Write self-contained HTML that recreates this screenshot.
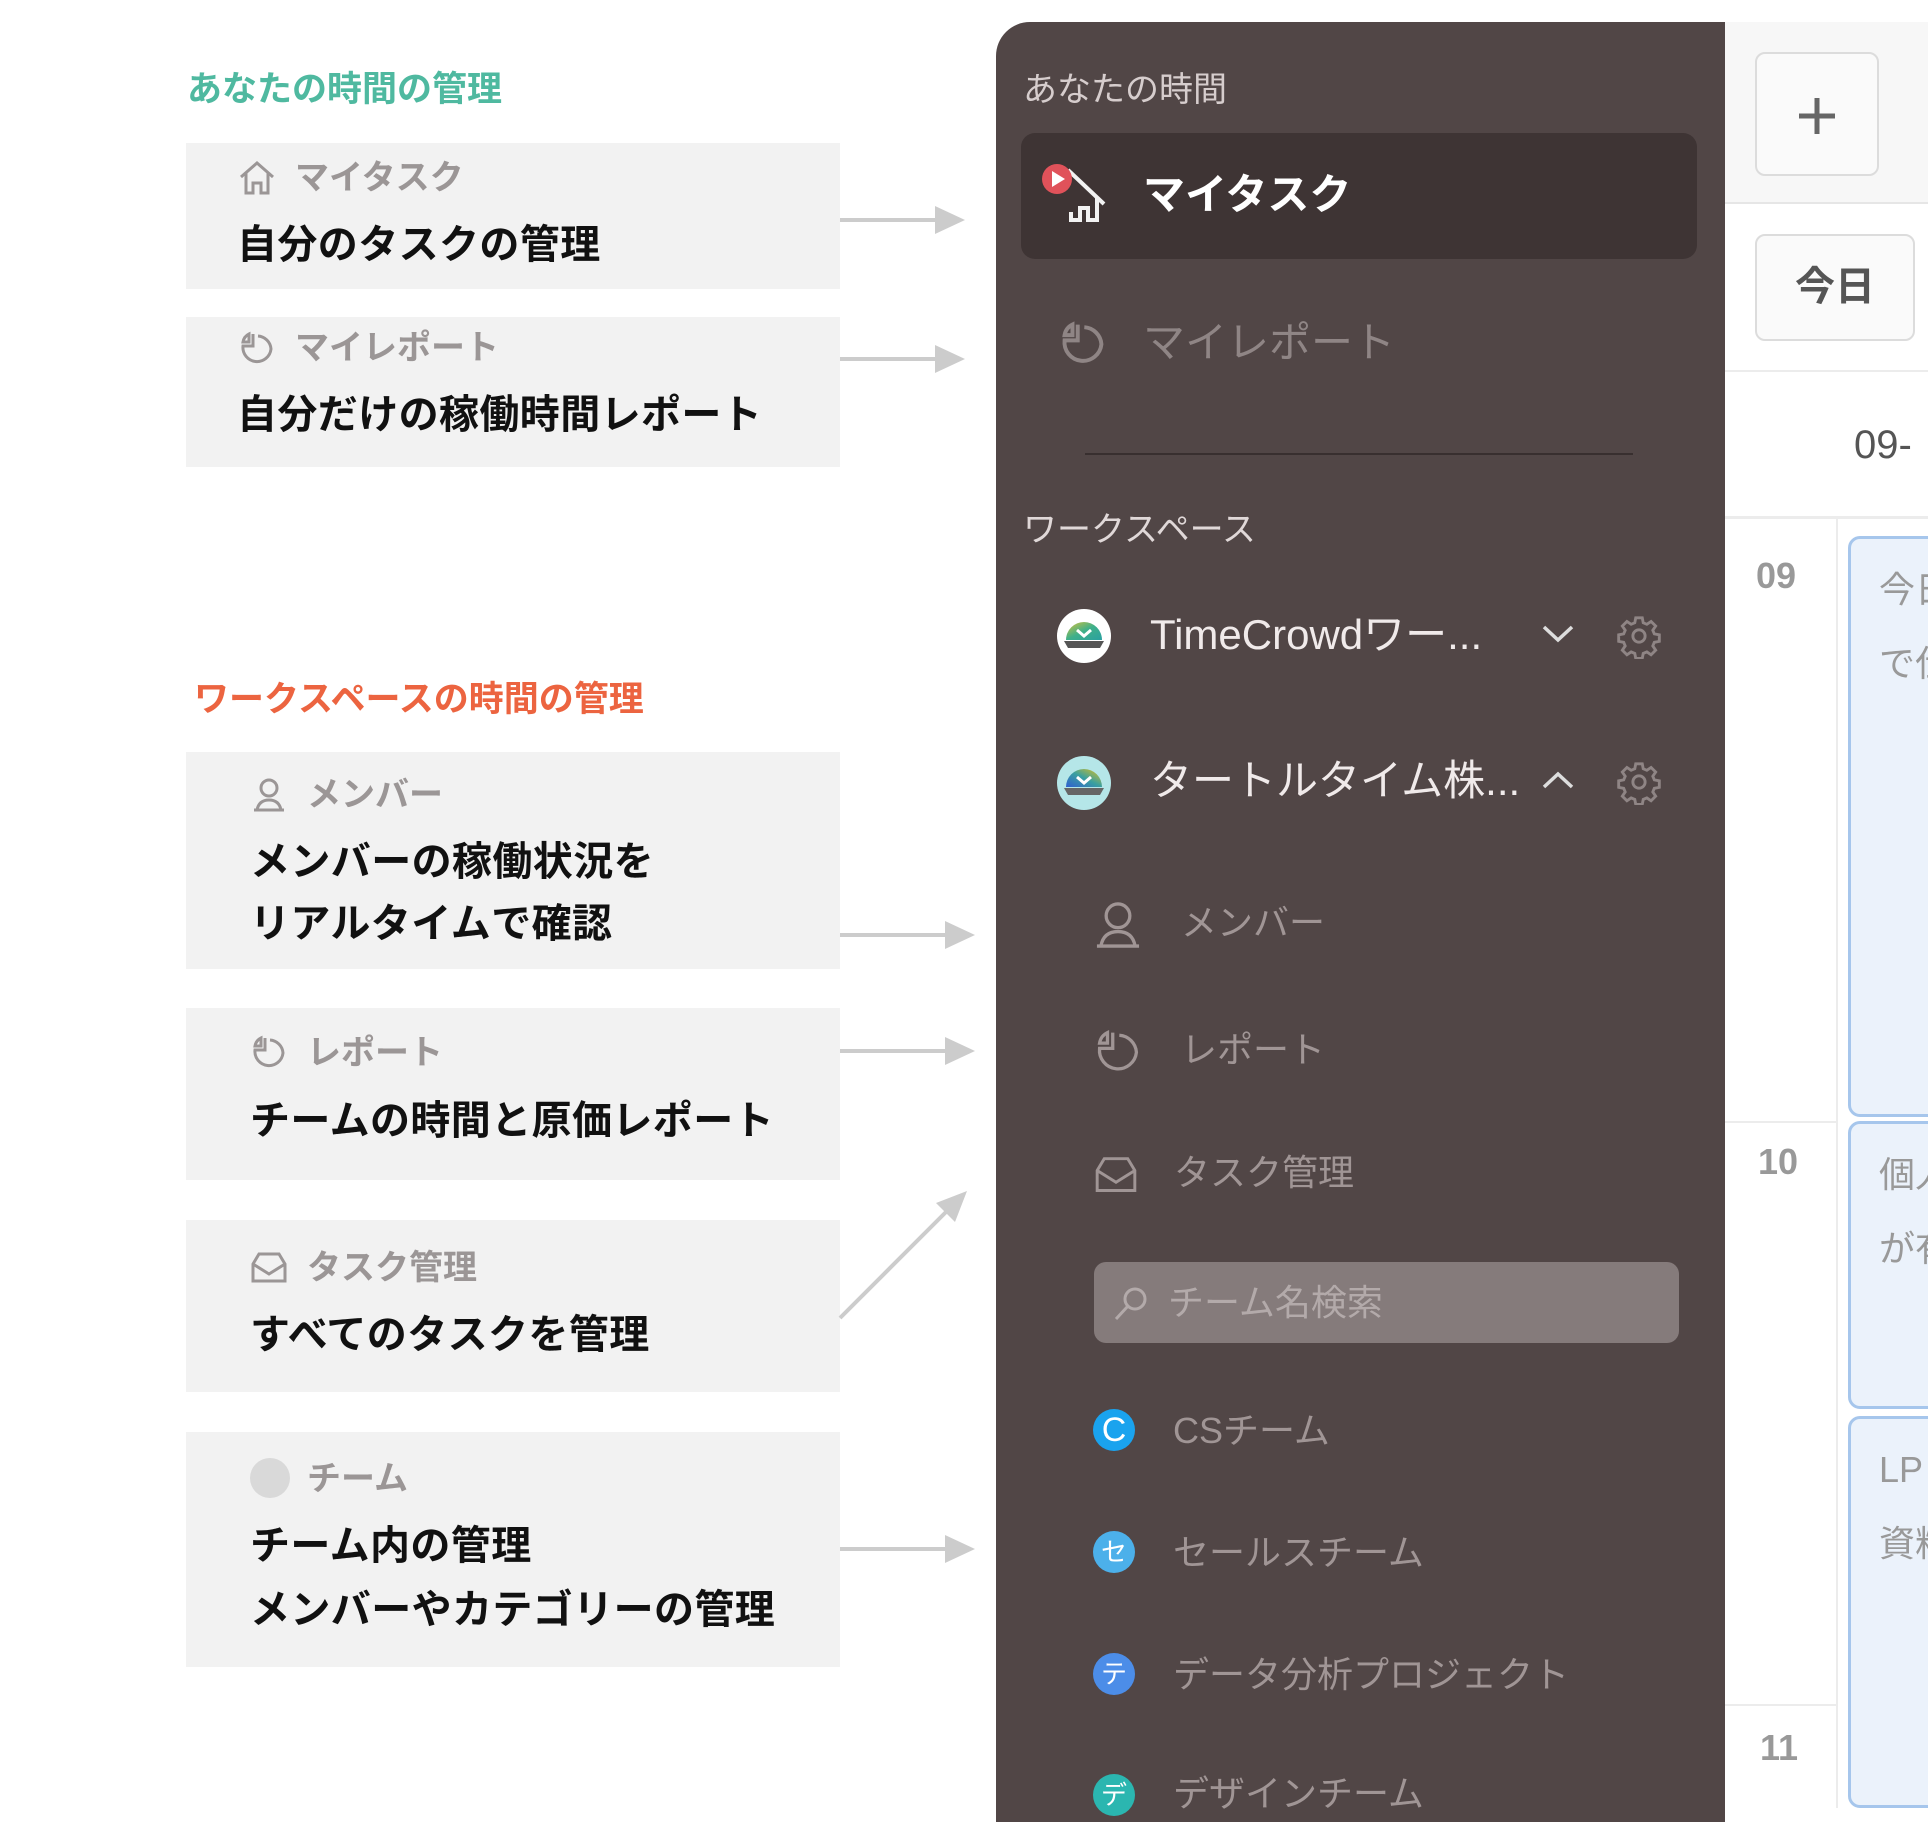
<!DOCTYPE html>
<html><head><meta charset="utf-8">
<style>
*{margin:0;padding:0;box-sizing:border-box}
body{width:1928px;height:1808px;background:#fff;position:relative;overflow:hidden;font-family:"Liberation Sans","Noto Sans CJK JP",sans-serif}
.a{position:absolute;white-space:nowrap}
.card{position:absolute;left:186px;width:654px;background:#f2f2f2}
.lab{position:absolute;font-size:34px;font-weight:700;color:#9b9696;line-height:40px;white-space:nowrap}
.big{position:absolute;font-size:40px;font-weight:700;color:#111;line-height:48px;white-space:nowrap;letter-spacing:0.4px}
.sb{position:absolute;left:996px;top:22px;width:729px;height:1800px;background:#514646;border-top-left-radius:34px}
.item{position:absolute;font-size:38px;color:#8f8585;line-height:46px;white-space:nowrap}
.sub{position:absolute;font-size:36px;color:#a09595;line-height:44px;white-space:nowrap}
</style></head><body>

<div class="a" style="left:187px;top:70px;font-size:35px;font-weight:700;color:#4fb9a0;line-height:40px">あなたの時間の管理</div>
<div class="a" style="left:194px;top:680px;font-size:35px;font-weight:700;color:#ec6440;line-height:40px">ワークスペースの時間の管理</div>

<div class="card" style="top:143px;height:146px"></div>
<svg class="a" style="left:238px;top:159px" width="38" height="38" viewBox="0 0 38 38" fill="none" stroke="#9b9696" stroke-width="3"><path d="M3 18 L19 4 L35 18 M8 14 V34 H15 V24 H23 V34 H30 V14"/></svg>
<div class="lab" style="left:295px;top:158px">マイタスク</div>
<div class="big" style="left:237px;top:221px">自分のタスクの管理</div>

<div class="card" style="top:317px;height:150px"></div>
<svg class="a" style="left:238px;top:329px" width="38" height="38" viewBox="0 0 38 38" fill="none" stroke="#9b9696" stroke-width="3"><path d="M15 5 V17 H5 A14 14 0 0 0 33 20 A14 14 0 0 0 20 7"/><path d="M5 13 A11 11 0 0 1 11 5 V13 Z"/></svg>
<div class="lab" style="left:295px;top:328px">マイレポート</div>
<div class="big" style="left:237px;top:391px">自分だけの稼働時間レポート</div>

<div class="card" style="top:752px;height:217px"></div>
<svg class="a" style="left:250px;top:776px" width="38" height="38" viewBox="0 0 38 38" fill="none" stroke="#9b9696" stroke-width="3"><circle cx="19" cy="12" r="8"/><path d="M4 34 H34 M7 34 Q9 24 19 24 Q29 24 31 34"/></svg>
<div class="lab" style="left:307px;top:775px">メンバー</div>
<div class="big" style="left:250px;top:838px">メンバーの稼働状況を</div>
<div class="big" style="left:250px;top:900px">リアルタイムで確認</div>

<div class="card" style="top:1008px;height:172px"></div>
<svg class="a" style="left:250px;top:1033px" width="38" height="38" viewBox="0 0 38 38" fill="none" stroke="#9b9696" stroke-width="3"><path d="M15 5 V17 H5 A14 14 0 0 0 33 20 A14 14 0 0 0 20 7"/><path d="M5 13 A11 11 0 0 1 11 5 V13 Z"/></svg>
<div class="lab" style="left:307px;top:1033px">レポート</div>
<div class="big" style="left:250px;top:1097px">チームの時間と原価レポート</div>

<div class="card" style="top:1220px;height:172px"></div>
<svg class="a" style="left:250px;top:1250px" width="38" height="34" viewBox="0 0 38 34" fill="none" stroke="#9b9696" stroke-width="3"><path d="M3 14 L9 4 H29 L35 14 V31 H3 Z M3 14 L19 24 L35 14"/></svg>
<div class="lab" style="left:307px;top:1248px">タスク管理</div>
<div class="big" style="left:250px;top:1311px">すべてのタスクを管理</div>

<div class="card" style="top:1432px;height:235px"></div>
<div class="a" style="left:250px;top:1458px;width:40px;height:40px;border-radius:50%;background:#d9d9d9"></div>
<div class="lab" style="left:307px;top:1459px">チーム</div>
<div class="big" style="left:250px;top:1522px">チーム内の管理</div>
<div class="big" style="left:250px;top:1586px">メンバーやカテゴリーの管理</div>

<svg class="a" style="left:0;top:0" width="1000" height="1808" stroke="#cccccc" stroke-width="4" fill="#cccccc">
<line x1="840" y1="220" x2="940" y2="220"/><polygon points="935,206 965,220 935,234" stroke="none"/>
<line x1="840" y1="359" x2="940" y2="359"/><polygon points="935,345 965,359 935,373" stroke="none"/>
<line x1="840" y1="935" x2="950" y2="935"/><polygon points="945,921 975,935 945,949" stroke="none"/>
<line x1="840" y1="1051" x2="950" y2="1051"/><polygon points="945,1037 975,1051 945,1065" stroke="none"/>
<line x1="840" y1="1549" x2="950" y2="1549"/><polygon points="945,1535 975,1549 945,1563" stroke="none"/>
<line x1="840" y1="1318" x2="950" y2="1208"/><polygon points="967,1191 955,1222 936,1203" stroke="none"/>
</svg>

<!-- right calendar -->
<div class="a" style="left:1725px;top:22px;width:203px;height:181px;background:#f7f7f7"></div>
<div class="a" style="left:1725px;top:202px;width:203px;height:2px;background:#e6e6e6"></div>
<div class="a" style="left:1755px;top:52px;width:124px;height:124px;border:2px solid #dcdcdc;border-radius:10px;background:#fafafa"></div>
<svg class="a" style="left:1795px;top:94px" width="44" height="44" viewBox="0 0 44 44" stroke="#666" stroke-width="5"><path d="M22 4 V40 M4 22 H40"/></svg>
<div class="a" style="left:1755px;top:234px;width:160px;height:107px;border:2px solid #dcdcdc;border-radius:10px;background:#fafafa;font-size:40px;font-weight:700;color:#555;text-align:center;line-height:102px">今日</div>
<div class="a" style="left:1725px;top:370px;width:203px;height:2px;background:#ececec"></div>
<div class="a" style="left:1854px;top:423px;font-size:40px;color:#555;line-height:44px">09-</div>
<div class="a" style="left:1725px;top:516px;width:203px;height:3px;background:#ececec"></div>
<div class="a" style="left:1836px;top:519px;width:2px;height:1289px;background:#ececec"></div>
<div class="a" style="left:1725px;top:1121px;width:111px;height:2px;background:#ececec"></div>
<div class="a" style="left:1725px;top:1704px;width:111px;height:2px;background:#ececec"></div>
<div class="a" style="left:1756px;top:556px;font-size:36px;font-weight:700;color:#999;line-height:40px">09</div>
<div class="a" style="left:1758px;top:1142px;font-size:36px;font-weight:700;color:#999;line-height:40px">10</div>
<div class="a" style="left:1760px;top:1728px;font-size:36px;font-weight:700;color:#999;line-height:40px">11</div>
<div class="a" style="left:1848px;top:536px;width:100px;height:581px;background:#ebf2fb;border:3px solid #a6c6ec;border-radius:12px;font-size:36px;color:#999;padding:14px 0 0 28px;line-height:74px">今日<br>で仕</div>
<div class="a" style="left:1848px;top:1121px;width:100px;height:288px;background:#ebf2fb;border:3px solid #a6c6ec;border-radius:12px;font-size:36px;color:#999;padding:14px 0 0 28px;line-height:74px">個人<br>が有</div>
<div class="a" style="left:1848px;top:1416px;width:100px;height:392px;background:#ebf2fb;border:3px solid #a6c6ec;border-radius:12px;font-size:36px;color:#999;padding:14px 0 0 28px;line-height:74px">LP<br>資料</div>

<!-- sidebar -->
<div class="sb"></div>
<div class="a" style="left:1023px;top:70px;font-size:34px;color:#d6cdcd;line-height:40px">あなたの時間</div>
<div class="a" style="left:1021px;top:133px;width:676px;height:126px;background:#3e3434;border-radius:14px"></div>
<svg class="a" style="left:1040px;top:160px" width="70" height="66" viewBox="0 0 70 66" fill="none">
<path d="M28 10 L64 44 M57 38 V60 H48 V48 H40 V60 H31 V52" stroke="#f2f2f2" stroke-width="4"/>
<circle cx="17" cy="19" r="15" fill="#e0525a"/><polygon points="12,11 25,19 12,27" fill="#fff"/></svg>
<div class="a" style="left:1143px;top:170px;font-size:42px;font-weight:700;color:#fff;line-height:50px">マイタスク</div>
<svg class="a" style="left:1058px;top:318px" width="50" height="50" viewBox="0 0 38 38" fill="none" stroke="#8f8585" stroke-width="3"><path d="M15 5 V17 H5 A14 14 0 0 0 33 20 A14 14 0 0 0 20 7"/><path d="M5 13 A11 11 0 0 1 11 5 V13 Z"/></svg>
<div class="item" style="left:1143px;top:320px;font-size:42px">マイレポート</div>
<div class="a" style="left:1085px;top:453px;width:548px;height:2px;background:#382f2f"></div>
<div class="a" style="left:1023px;top:510px;font-size:34px;color:#e0d8d8;line-height:40px">ワークスペース</div>

<svg class="a" style="left:1056px;top:608px" width="56" height="56" viewBox="0 0 56 56"><defs><linearGradient id="g1" x1="0" y1="0" x2="1" y2="1"><stop offset="0" stop-color="#d8c23a"/><stop offset=".5" stop-color="#3fb08a"/><stop offset="1" stop-color="#2aa0a0"/></linearGradient><linearGradient id="g2" x1="0" y1="1" x2="1" y2="0"><stop offset="0" stop-color="#2f5fd0"/><stop offset=".5" stop-color="#3aa0a0"/><stop offset="1" stop-color="#e0c020"/></linearGradient></defs>
<circle cx="28" cy="28" r="27" fill="#fff"/><path d="M10 32 A18 18 0 0 1 46 32 Z" fill="url(#g1)"/><path d="M8 33 H48 L44 40 H12 Z" fill="#555"/><path d="M21 22 L28 28 L35 22" stroke="#fff" stroke-width="3" fill="none"/></svg>
<div class="a" style="left:1150px;top:610px;font-size:42px;color:#f0eaea;line-height:50px">TimeCrowdワー...</div>
<svg class="a" style="left:1540px;top:622px" width="36" height="24" viewBox="0 0 36 24" fill="none" stroke="#ddd" stroke-width="3.5"><path d="M4 5 L18 18 L32 5"/></svg>
<svg class="a" style="left:1616px;top:613px" width="46" height="46" viewBox="0 0 24 24" fill="none" stroke="#8f8585" stroke-width="1.5"><circle cx="12" cy="12" r="3.2"/><path d="M10.3 2.5h3.4l.5 2.6 1.9.8 2.2-1.5 2.4 2.4-1.5 2.2.8 1.9 2.6.5v3.4l-2.6.5-.8 1.9 1.5 2.2-2.4 2.4-2.2-1.5-1.9.8-.5 2.6h-3.4l-.5-2.6-1.9-.8-2.2 1.5-2.4-2.4 1.5-2.2-.8-1.9-2.6-.5v-3.4l2.6-.5.8-1.9-1.5-2.2 2.4-2.4 2.2 1.5 1.9-.8z"/></svg>

<svg class="a" style="left:1056px;top:755px" width="56" height="56" viewBox="0 0 56 56"><circle cx="28" cy="28" r="27" fill="#b5e6e8"/><path d="M10 32 A18 18 0 0 1 46 32 Z" fill="url(#g2)"/><path d="M8 33 H48 L44 40 H12 Z" fill="#666"/><path d="M21 22 L28 28 L35 22" stroke="#fff" stroke-width="3" fill="none"/></svg>
<div class="a" style="left:1150px;top:756px;font-size:42px;color:#f0eaea;line-height:50px">タートルタイム株...</div>
<svg class="a" style="left:1540px;top:768px" width="36" height="24" viewBox="0 0 36 24" fill="none" stroke="#ddd" stroke-width="3.5"><path d="M4 19 L18 6 L32 19"/></svg>
<svg class="a" style="left:1616px;top:759px" width="46" height="46" viewBox="0 0 24 24" fill="none" stroke="#8f8585" stroke-width="1.5"><circle cx="12" cy="12" r="3.2"/><path d="M10.3 2.5h3.4l.5 2.6 1.9.8 2.2-1.5 2.4 2.4-1.5 2.2.8 1.9 2.6.5v3.4l-2.6.5-.8 1.9 1.5 2.2-2.4 2.4-2.2-1.5-1.9.8-.5 2.6h-3.4l-.5-2.6-1.9-.8-2.2 1.5-2.4-2.4 1.5-2.2-.8-1.9-2.6-.5v-3.4l2.6-.5.8-1.9-1.5-2.2 2.4-2.4 2.2 1.5 1.9-.8z"/></svg>

<svg class="a" style="left:1093px;top:900px" width="50" height="50" viewBox="0 0 38 38" fill="none" stroke="#a09595" stroke-width="2.5"><circle cx="19" cy="12" r="9"/><path d="M3 35 H35 M6 35 Q8 24 19 24 Q30 24 32 35"/></svg>
<div class="sub" style="left:1181px;top:901px">メンバー</div>
<svg class="a" style="left:1093px;top:1026px" width="50" height="50" viewBox="0 0 38 38" fill="none" stroke="#a09595" stroke-width="2.5"><path d="M15 5 V17 H5 A14 14 0 0 0 33 20 A14 14 0 0 0 20 7"/><path d="M5 13 A11 11 0 0 1 11 5 V13 Z"/></svg>
<div class="sub" style="left:1181px;top:1028px">レポート</div>
<svg class="a" style="left:1093px;top:1154px" width="46" height="40" viewBox="0 0 38 34" fill="none" stroke="#a09595" stroke-width="2.5"><path d="M3 14 L9 4 H29 L35 14 V31 H3 Z M3 14 L19 24 L35 14"/></svg>
<div class="sub" style="left:1174px;top:1151px">タスク管理</div>

<div class="a" style="left:1094px;top:1262px;width:585px;height:81px;background:#857b7b;border-radius:12px"></div>
<svg class="a" style="left:1111px;top:1283px" width="40" height="40" viewBox="0 0 40 40" fill="none" stroke="#b3aaaa" stroke-width="3"><circle cx="24" cy="16" r="10"/><path d="M17 23 L5 36"/></svg>
<div class="sub" style="left:1168px;top:1281px;color:#b3aaaa">チーム名検索</div>

<div class="a" style="left:1093px;top:1409px;width:42px;height:42px;border-radius:50%;background:#1aa3ee;color:#fff;font-size:34px;text-align:center;line-height:42px">C</div>
<div class="sub" style="left:1173px;top:1409px">CSチーム</div>
<div class="a" style="left:1093px;top:1531px;width:42px;height:42px;border-radius:50%;background:#4cb0ea;color:#fff;font-size:26px;text-align:center;line-height:42px">セ</div>
<div class="sub" style="left:1173px;top:1531px">セールスチーム</div>
<div class="a" style="left:1093px;top:1653px;width:42px;height:42px;border-radius:50%;background:#4c8de8;color:#fff;font-size:26px;text-align:center;line-height:42px">テ</div>
<div class="sub" style="left:1173px;top:1653px">データ分析プロジェクト</div>
<div class="a" style="left:1093px;top:1774px;width:42px;height:42px;border-radius:50%;background:#2bb6b0;color:#fff;font-size:26px;text-align:center;line-height:42px">デ</div>
<div class="sub" style="left:1173px;top:1772px">デザインチーム</div>

</body></html>
